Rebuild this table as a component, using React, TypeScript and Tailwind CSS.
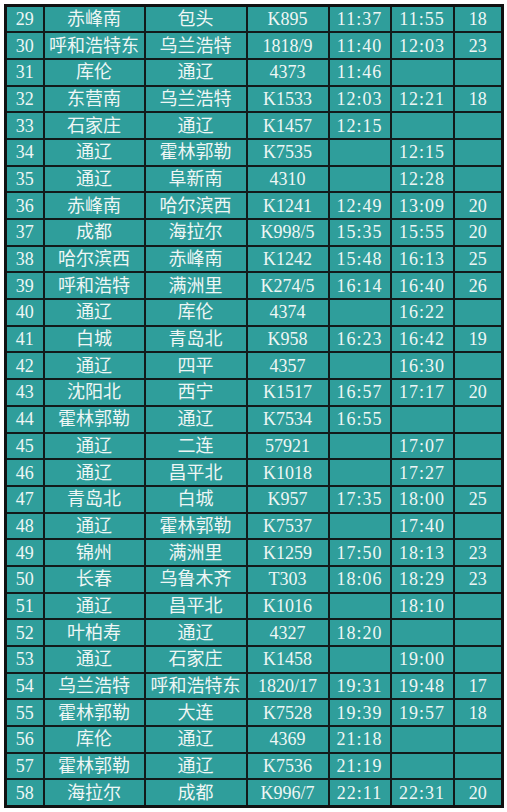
import React from 'react';

const rows: string[][] = [
  ['29', '赤峰南', '包头', 'K895', '11:37', '11:55', '18'],
  ['30', '呼和浩特东', '乌兰浩特', '1818/9', '11:40', '12:03', '23'],
  ['31', '库伦', '通辽', '4373', '11:46', '', ''],
  ['32', '东营南', '乌兰浩特', 'K1533', '12:03', '12:21', '18'],
  ['33', '石家庄', '通辽', 'K1457', '12:15', '', ''],
  ['34', '通辽', '霍林郭勒', 'K7535', '', '12:15', ''],
  ['35', '通辽', '阜新南', '4310', '', '12:28', ''],
  ['36', '赤峰南', '哈尔滨西', 'K1241', '12:49', '13:09', '20'],
  ['37', '成都', '海拉尔', 'K998/5', '15:35', '15:55', '20'],
  ['38', '哈尔滨西', '赤峰南', 'K1242', '15:48', '16:13', '25'],
  ['39', '呼和浩特', '满洲里', 'K274/5', '16:14', '16:40', '26'],
  ['40', '通辽', '库伦', '4374', '', '16:22', ''],
  ['41', '白城', '青岛北', 'K958', '16:23', '16:42', '19'],
  ['42', '通辽', '四平', '4357', '', '16:30', ''],
  ['43', '沈阳北', '西宁', 'K1517', '16:57', '17:17', '20'],
  ['44', '霍林郭勒', '通辽', 'K7534', '16:55', '', ''],
  ['45', '通辽', '二连', '57921', '', '17:07', ''],
  ['46', '通辽', '昌平北', 'K1018', '', '17:27', ''],
  ['47', '青岛北', '白城', 'K957', '17:35', '18:00', '25'],
  ['48', '通辽', '霍林郭勒', 'K7537', '', '17:40', ''],
  ['49', '锦州', '满洲里', 'K1259', '17:50', '18:13', '23'],
  ['50', '长春', '乌鲁木齐', 'T303', '18:06', '18:29', '23'],
  ['51', '通辽', '昌平北', 'K1016', '', '18:10', ''],
  ['52', '叶柏寿', '通辽', '4327', '18:20', '', ''],
  ['53', '通辽', '石家庄', 'K1458', '', '19:00', ''],
  ['54', '乌兰浩特', '呼和浩特东', '1820/17', '19:31', '19:48', '17'],
  ['55', '霍林郭勒', '大连', 'K7528', '19:39', '19:57', '18'],
  ['56', '库伦', '通辽', '4369', '21:18', '', ''],
  ['57', '霍林郭勒', '通辽', 'K7536', '21:19', '', ''],
  ['58', '海拉尔', '成都', 'K996/7', '22:11', '22:31', '20'],
];

const widths = ['w-[38px]', 'w-[101px]', 'w-[102px]', 'w-[82px]', 'w-[62px]', 'w-[63px]', 'w-[49px]'];

export default function App() {
  return (
    <div className="w-[507px] h-[812px] bg-white pt-[4px] pl-[4px]">
      <table
        className="table-fixed border-collapse border-[3px] border-[#111] bg-[#2f9e9b] text-[#eef6f5] text-[18px] w-[497px] h-[803px]"
        style={{ fontFamily: '"Liberation Serif", "Noto Sans CJK SC", serif' }}
      >
        <colgroup>
          {widths.map((w, i) => (
            <col key={i} className={w} />
          ))}
        </colgroup>
        <tbody>
          {rows.map((r) => (
            <tr key={r[0]} className="h-[26.7px]">
              {r.map((c, i) => (
                <td
                  key={i}
                  className={
                    'border-2 border-[#121a1a] text-center leading-none p-0 whitespace-nowrap ' +
                    (i === 4 || i === 5 ? 'tracking-[1px]' : '')
                  }
                >
                  {c}
                </td>
              ))}
            </tr>
          ))}
        </tbody>
      </table>
    </div>
  );
}
